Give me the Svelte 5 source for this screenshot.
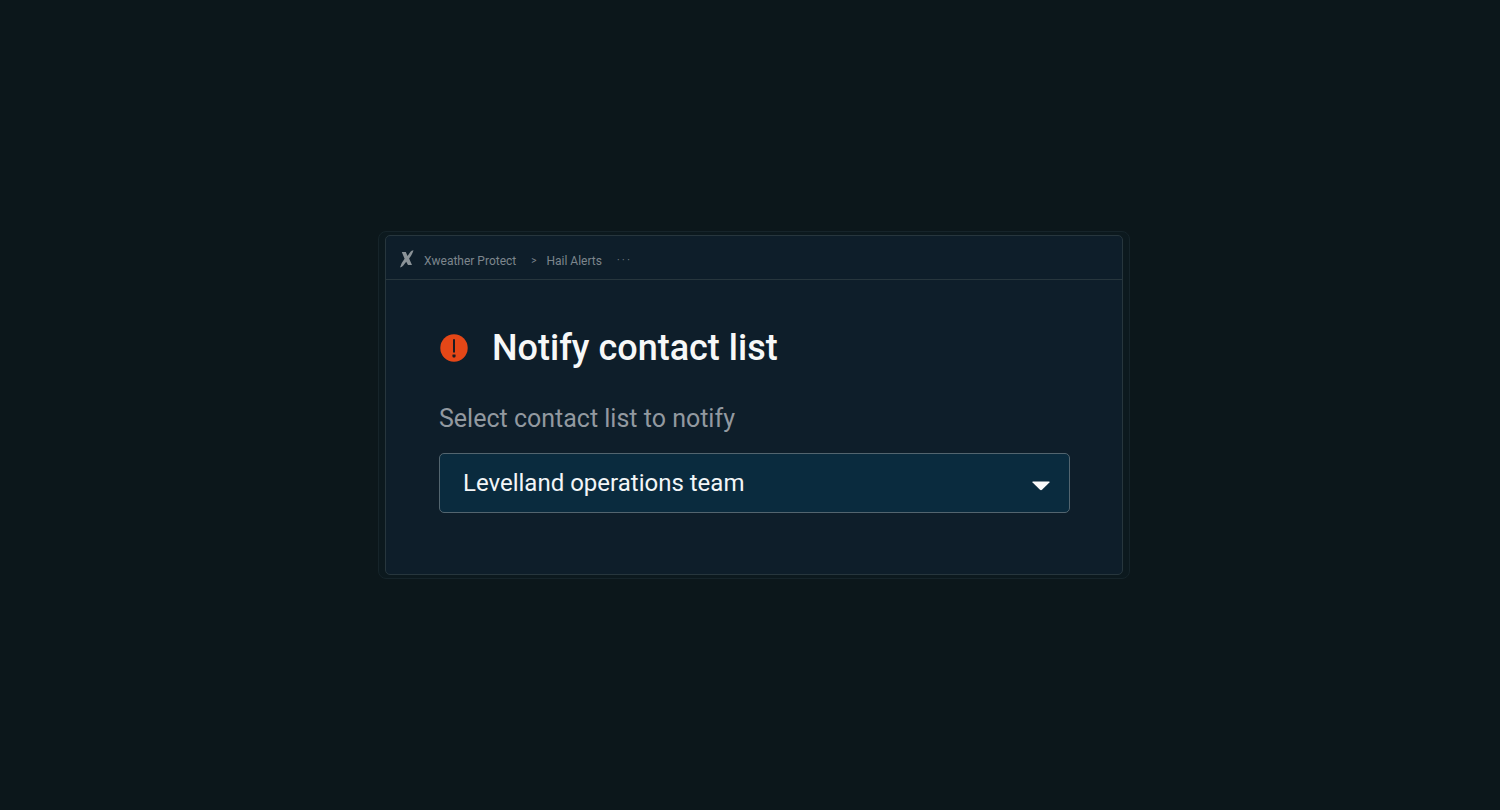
<script lang="ts">
  const lists = ['Levelland operations team'];
  let selected = $state(lists[0]);
</script>

<main>
  <div class="frame">
    <section class="panel">
      <nav class="crumbs" aria-label="Breadcrumb">
        <svg class="logo" viewBox="0 0 14 18" aria-hidden="true">
          <path d="M1.8 2.1H5.8L7.5 5.9L10.5 1.7Q11.4 0.5 13.5 0.3Q12.2 4.8 9.1 8.6L12 15H8L6.2 11.7L3.3 15.6Q2.2 17 0 17.4Q1.4 12.7 4.6 8.8Z" />
        </svg>
        <a class="product" href="#protect">Xweather Protect</a>
        <span class="separator">&gt;</span>
        <a class="section" href="#alerts">Hail Alerts</a>
        <span class="more">· · ·</span>
      </nav>

      <div class="content">
        <header>
          <svg class="alert" viewBox="0 0 28 28" aria-hidden="true">
            <circle cx="14" cy="14" r="13.7" />
            <path d="M13 5.2H15V18.5H13Z" />
            <path d="M12.6 20.4H15.4L15.7 22L15 23.4H13L12.3 22Z" />
          </svg>
          <h1>Notify contact list</h1>
        </header>

        <label for="contacts">Select contact list to notify</label>
        <div class="field">
          <select id="contacts" bind:value={selected}>
            {#each lists as list}
              <option value={list}>{list}</option>
            {/each}
          </select>
          <svg class="caret" viewBox="0 0 18 10" aria-hidden="true">
            <path d="M1 0.5H17Q18 0.5 17.4 1.5L10 8.8Q9 9.7 8 8.8L0.6 1.5Q0 0.5 1 0.5Z" />
          </svg>
        </div>
      </div>
    </section>
  </div>
</main>

<style>
  :global(body) {
    margin: 0;
    background: #0c171b;
  }

  main {
    box-sizing: border-box;
    min-height: 100vh;
    padding-left: 8px;
    display: flex;
    align-items: center;
    justify-content: center;
    font-family: Roboto, "Liberation Sans", sans-serif;
  }

  .frame {
    box-sizing: border-box;
    width: 100%;
    max-width: 752px;
    padding: 3px 6px;
    border: 1px solid #16242a;
    border-radius: 8px;
    background: #0c191e;
  }

  .panel {
    border: 1px solid #27363d;
    border-radius: 5px;
    background: #0e1e2a;
  }

  .crumbs {
    display: flex;
    align-items: center;
    height: 43px;
    padding: 0 14px;
    border-bottom: 1px solid #27363d;
    font-size: 12px;
    line-height: 16px;
    color: #7d868d;
  }

  .crumbs a {
    color: inherit;
    text-decoration: none;
  }

  .logo {
    width: 14px;
    height: 18px;
    margin-top: 3px;
    fill: #8b9398;
  }

  .product,
  .separator,
  .section,
  .more {
    margin-top: 6px;
  }

  .product {
    margin-left: 10px;
  }

  .separator {
    margin-left: 15px;
    font-size: 10px;
  }

  .section {
    margin-left: 10px;
  }

  .more {
    margin-left: 15px;
    font-size: 10px;
  }

  .content {
    padding: 48px 52px 61px 53px;
  }

  header {
    display: flex;
    align-items: center;
    gap: 24px;
  }

  .alert {
    width: 28px;
    height: 28px;
    margin-left: 1px;
  }

  .alert circle {
    fill: #e54717;
  }

  .alert path {
    fill: #1b1c22;
  }

  h1 {
    margin: 0;
    font-size: 36px;
    line-height: 40px;
    font-weight: 500;
    color: #f7f8f8;
  }

  label {
    display: block;
    margin-top: 36px;
    font-size: 25px;
    line-height: 30px;
    color: #9299a0;
  }

  .field {
    display: grid;
    align-items: center;
    margin-top: 19px;
  }

  .field > * {
    grid-area: 1 / 1;
  }

  select {
    appearance: none;
    width: 100%;
    height: 60px;
    padding: 0 48px 0 23px;
    border: 1px solid #53656f;
    border-radius: 5px;
    background: #0a2b3e;
    color: #f3f6f7;
    font: inherit;
    font-size: 24px;
  }

  .caret {
    justify-self: end;
    width: 18px;
    height: 10px;
    margin: 5px 20px 0 0;
    fill: #fafafa;
    pointer-events: none;
  }
</style>
